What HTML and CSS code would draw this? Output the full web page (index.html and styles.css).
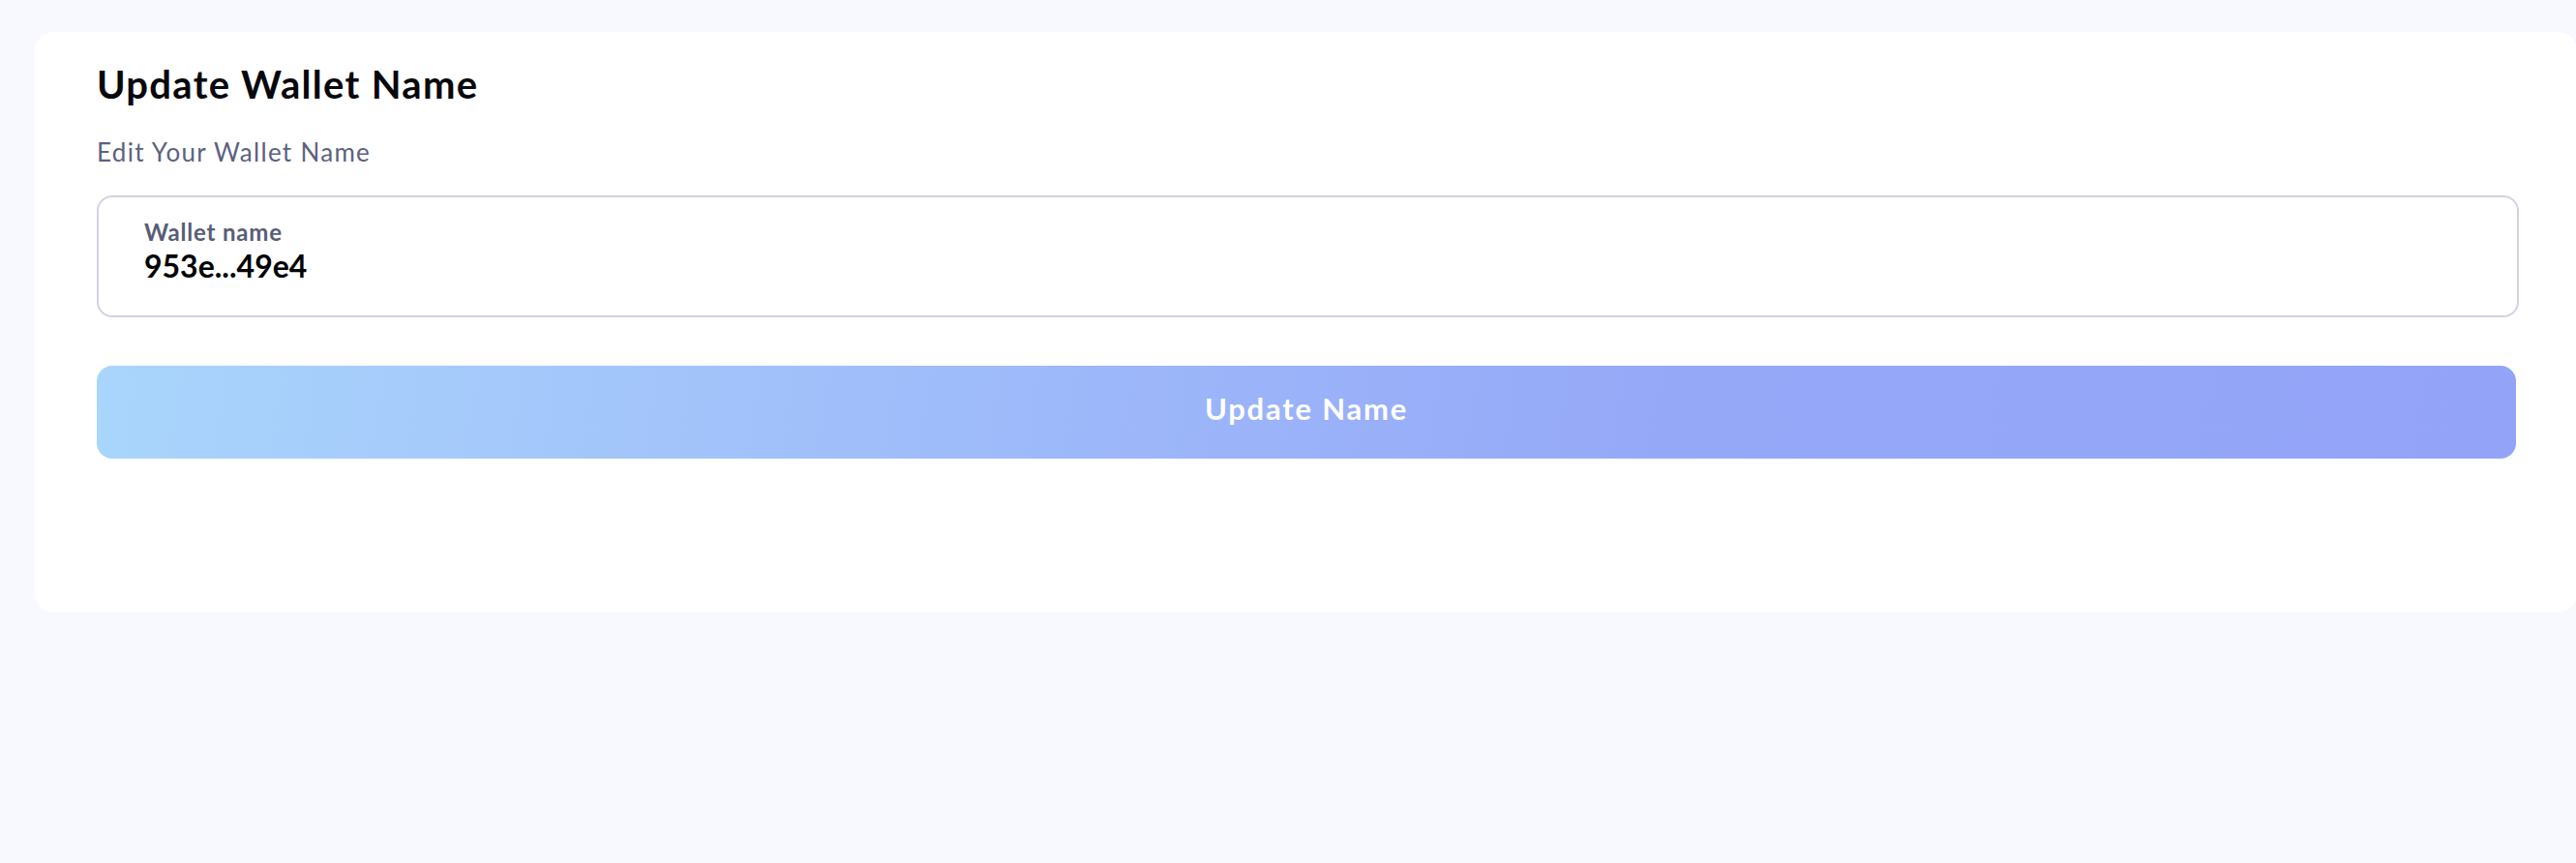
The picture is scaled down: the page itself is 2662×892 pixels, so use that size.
FILE: index.html
```html
<!DOCTYPE html>
<html lang="en">
<head>
<meta charset="utf-8">
<title>Update Wallet Name</title>
<link rel="stylesheet" href="styles.css">
</head>
<body>
<div class="page">
  <section class="card">
    <h1 class="title">Update Wallet Name</h1>
    <p class="subtitle">Edit Your Wallet Name</p>
    <div class="field">
      <label class="field-label">Wallet name</label>
      <div class="field-value">953e...49e4</div>
    </div>
    <button class="btn">Update Name</button>
  </section>
</div>
</body>
</html>
```

FILE: styles.css
```css
html, body {
  margin: 0;
  padding: 0;
}
body {
  background: #f8f9fe;
  font-family: "Lato", "Open Sans", sans-serif;
  overflow: hidden;
  width: 2662px;
  height: 892px;
}
.page {
  padding: 33px 0 0 36px;
}
.card {
  box-sizing: border-box;
  width: 2627px;
  height: 600px;
  background: #ffffff;
  border-radius: 20px;
  padding: 30px 0 0 64px;
}
.title {
  margin: 0;
  font-size: 40px;
  line-height: 48px;
  font-weight: 700;
  letter-spacing: 1.3px;
  color: #08080c;
}
.subtitle {
  margin: 30px 0 0;
  font-size: 26px;
  line-height: 32px;
  font-weight: 400;
  letter-spacing: 1.3px;
  color: #5c6180;
}
.field {
  box-sizing: border-box;
  margin-top: 29px;
  width: 2503px;
  height: 126px;
  border: 2px solid #d3d2e3;
  border-radius: 16px;
  padding: 22px 0 0 47px;
}
.field-label {
  display: block;
  font-size: 24px;
  line-height: 28px;
  font-weight: 700;
  letter-spacing: 0.8px;
  color: #585d77;
}
.field-value {
  margin-top: 2px;
  font-size: 32px;
  line-height: 38px;
  font-weight: 700;
  color: #000000;
}
.btn {
  display: block;
  box-sizing: border-box;
  margin-top: 50px;
  width: 2500px;
  height: 96px;
  padding: 0 0 8px;
  border: none;
  border-radius: 16px;
  background: linear-gradient(100deg, #a9d5fb 0%, #9fbcfa 35%, #95a8f8 65%, #93a4f8 100%);
  color: #ffffff;
  font-family: inherit;
  font-size: 31px;
  font-weight: 700;
  letter-spacing: 1.8px;
  cursor: pointer;
}
```
